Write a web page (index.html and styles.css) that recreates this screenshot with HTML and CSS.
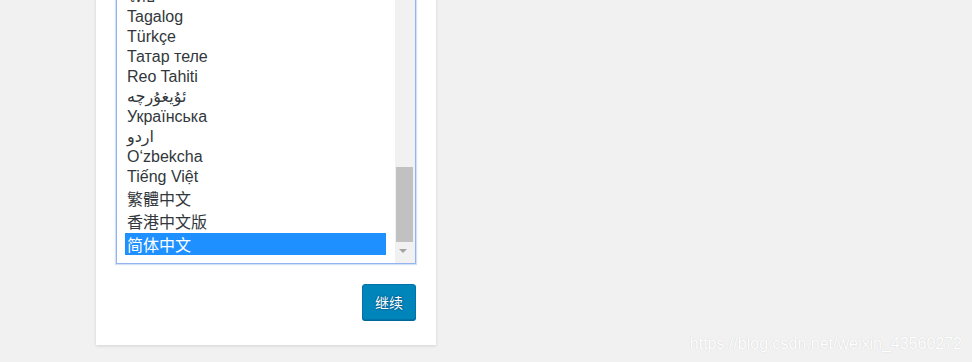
FILE: index.html
```html
<!DOCTYPE html>
<html lang="zh-CN">
<head>
<meta charset="utf-8">
<title>选择语言</title>
<link rel="stylesheet" href="styles.css">
</head>
<body>
<div class="card">
  <div class="listbox">
    <div class="options">
      <div class="opt">ไทย</div>
      <div class="opt">Tagalog</div>
      <div class="opt">Türkçe</div>
      <div class="opt">Татар теле</div>
      <div class="opt">Reo Tahiti</div>
      <div class="opt">ئۇيغۇرچە</div>
      <div class="opt">Українська</div>
      <div class="opt">اردو</div>
      <div class="opt">O‘zbekcha</div>
      <div class="opt">Tiếng Việt</div>
      <div class="opt cjk">繁體中文</div>
      <div class="opt cjk">香港中文版</div>
      <div class="opt cjk last selected">简体中文</div>
    </div>
    <div class="scrollbar">
      <div class="thumb"></div>
      <div class="arrow-btn"><span class="arrow"></span></div>
    </div>
  </div>
  <div class="actions">
    <button class="btn-primary" type="button">继续</button>
  </div>
</div>
<div class="watermark">https://blog.csdn.net/weixin_43560272</div>
</body>
</html>
```

FILE: styles.css
```css
html, body {
  margin: 0;
  padding: 0;
}
body {
  background: #f1f1f1;
  font-family: "Liberation Sans", Arial, "Noto Sans CJK SC", sans-serif;
  color: #32373c;
  height: 362px;
  overflow: hidden;
  position: relative;
}
.card {
  width: 340px;
  box-sizing: border-box;
  margin: -40px 0 0 96px;
  padding: 20px 20px 25px 20px;
  background: #fff;
  box-shadow: 0 1px 3px rgba(0, 0, 0, 0.13);
}
.listbox {
  display: flex;
  width: 300px;
  height: 284px;
  box-sizing: border-box;
  border: 1px solid #93b4ee;
  box-shadow: 0 0 1px 1px rgba(160, 190, 240, 0.45);
  background: #fff;
}
.options {
  flex: 1;
  min-width: 0;
  overflow: hidden;
  display: flex;
  flex-direction: column;
  justify-content: flex-end;
  padding: 8px 9px 8px 8px;
}
.opt {
  flex-shrink: 0;
  height: 20px;
  line-height: 20px;
  padding: 0 2px;
  font-size: 16px;
  white-space: nowrap;
  font-family: "Liberation Sans", Arial, "DejaVu Sans", "Noto Sans CJK SC", sans-serif;
}
.opt.cjk {
  height: 23px;
  box-sizing: border-box;
  padding-top: 3px;
  line-height: 20px;
  font-family: "Liberation Sans", "Noto Sans CJK SC", sans-serif;
}
.opt.cjk.last {
  height: 22px;
  line-height: 19px;
}
.opt.selected {
  background: #1e90ff;
  color: #fff;
}
.scrollbar {
  width: 20px;
  flex-shrink: 0;
  background: #f1f1f1;
  display: flex;
  flex-direction: column;
  justify-content: flex-end;
}
.thumb {
  height: 75px;
  width: 17px;
  margin: 0 0 4px 1px;
  background: #c1c1c1;
}
.arrow-btn {
  height: 17px;
  box-sizing: border-box;
  padding: 3px 0 0 4px;
}
.arrow {
  display: block;
  width: 0;
  height: 0;
  border-left: 4px solid transparent;
  border-right: 4px solid transparent;
  border-top: 4px solid #a3a3a3;
}
.actions {
  display: flex;
  justify-content: flex-end;
  margin-top: 20px;
}
.btn-primary {
  height: 36px;
  width: 54px;
  padding: 0;
  border: 1px solid #0073aa;
  border-radius: 3px;
  background: #0085ba;
  box-shadow: 0 1px 0 #006799;
  color: #fff;
  font-family: "Noto Sans CJK SC", sans-serif;
  font-size: 14px;
  text-shadow: 0 -1px 1px #006799, 1px 0 1px #006799, 0 1px 1px #006799, -1px 0 1px #006799;
}
.watermark {
  position: absolute;
  right: 10px;
  bottom: 9px;
  font-family: "Liberation Sans", Arial, sans-serif;
  font-size: 16px;
  color: #ffffff;
  text-shadow: 0 0 1px rgba(0, 0, 0, 0.18);
}
```
